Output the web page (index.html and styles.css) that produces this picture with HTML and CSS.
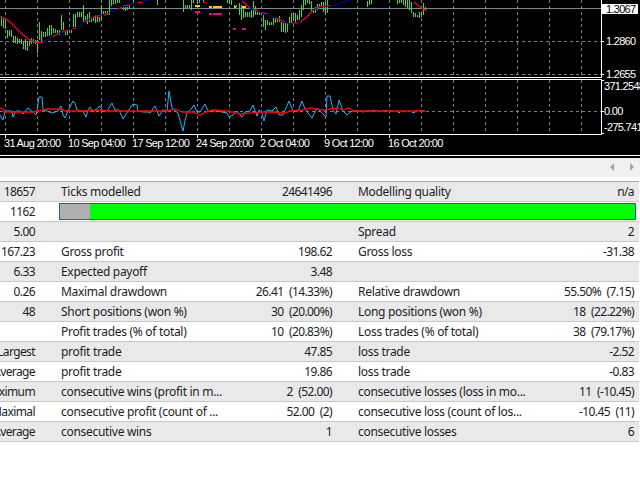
FILE: index.html
```html
<!DOCTYPE html>
<html lang="en">
    <head>
        <title>Strategy Tester Report</title>
        <meta charset="UTF-8">
        <link rel="stylesheet" href="styles.css">
    </head>
    <body>
        <svg class="chart" width="640" height="158" viewBox="0 0 640 158" xmlns="http://www.w3.org/2000/svg">
            <!-- grid -->
            <path class="grid-solid" d="M0 8.5H601"/>
            <path class="grid" d="M0 41.5H601M0 74.5H601M0 111.5H601"/>
            <path class="grid" d="M5.5 0V77M37.5 0V77M69.5 0V77M101.5 0V77M133.5 0V77M165.5 0V77M197.5 0V77M229.5 0V77M261.5 0V77M293.5 0V77M325.5 0V77M357.5 0V77M389.5 0V77M421.5 0V77M453.5 0V77M485.5 0V77M517.5 0V77M549.5 0V77M581.5 0V77"/>
            <path class="grid" d="M5.5 80V134M37.5 80V134M69.5 80V134M101.5 80V134M133.5 80V134M165.5 80V134M197.5 80V134M229.5 80V134M261.5 80V134M293.5 80V134M325.5 80V134M357.5 80V134M389.5 80V134M421.5 80V134M453.5 80V134M485.5 80V134M517.5 80V134M549.5 80V134M581.5 80V134"/>

            <!-- price bars -->
            <path class="bars" d="M1.5 16V26M3.5 17V28M5.5 20V29M7.5 30V38M9.5 30V36M11.5 30V37M13.5 36V43M15.5 36V43M17.5 38V44M19.5 39V43M21.5 39V44M23.5 41V49M25.5 39V50M27.5 41V51M29.5 39V46M31.5 38V44M33.5 39V43M35.5 40V44M37.5 40V53M39.5 22V40M41.5 31V42M43.5 32V37M45.5 32V37M47.5 28V36M49.5 25V36M51.5 25V35M53.5 28V33M55.5 29V33M57.5 30V35M59.5 30V35M61.5 15V30M63.5 22V30M65.5 30V35M67.5 30V35M69.5 29V32M71.5 30V33M73.5 14V27M75.5 14V27M77.5 12V17M79.5 12V17M81.5 12V17M83.5 5V22M85.5 16V20M87.5 14V24M89.5 12V22M91.5 17V22M93.5 16V21M95.5 15V23M97.5 16V22M99.5 17V22M101.5 5V20M103.5 11V15M105.5 11V15M107.5 11V15M109.5 0V15M111.5 0V6M113.5 0V4M115.5 0V4M117.5 0V3M119.5 0V3M123.5 7V10M125.5 7V11M127.5 7V10M129.5 5V9M133.5 0V4M157.5 0V5"/>
            <path class="bars" d="M183.5 0V12M185.5 5V8M187.5 5V8M189.5 5V8M191.5 0V10M193.5 0V3M197.5 0V4M199.5 0V3M203.5 0V3M227.5 0V3M229.5 0V4M231.5 0V5M234.5 5V8M236.5 5V7M239.5 3V15M241.5 5V20M243.5 7V18M245.5 12V17M247.5 12V17M249.5 12V17M251.5 10V18M253.5 1V17M255.5 6V15M257.5 12V15M259.5 12V15M261.5 12V15M263.5 15V27M265.5 20V30M267.5 20V25M269.5 22V25M271.5 22V25M273.5 18V25M275.5 18V23M277.5 18V22M279.5 16V22M281.5 22V32M283.5 23V32M285.5 23V33M287.5 23V32M289.5 17V25M291.5 13V23M293.5 13V20M295.5 13V22M297.5 15V20M299.5 10V20M301.5 5V17M303.5 0V10M305.5 0V5M307.5 0V3M309.5 0V4M311.5 1V12M313.5 10V13M315.5 7V13M317.5 4V10M319.5 4V8M321.5 2V7M323.5 2V12M325.5 2V15M327.5 0V13M367.5 1V7M369.5 0V5M371.5 0V4M397.5 0V4M399.5 0V3M401.5 0V3M403.5 0V5M405.5 0V7M407.5 0V8M409.5 0V10M411.5 2V13M413.5 12V17M415.5 13V17M417.5 15V17M419.5 12V18M421.5 12V17M423.5 3V15M425.5 7V10"/>

            <!-- moving average -->
            <polyline class="ma-blue" points="0,18 5,18 10,22 20,32 28,39 37,43 43,42 55,35 68,30 75,28 85,22 95,16 110,13 118,9 128,5 137,2 150,0"/>
            <polyline class="ma-red" points="0,18 5,18 10,22 20,32 28,39 37,43 43,42"/>
            <path class="ma-red" d="M52 37L58 34M62 32L68 30M73 29L76 28M85 22L88 20M93 17L100 15.500M104 15.500L110 13M118 9L122 7M123 6L130 5M138 2.500H142M203 2L207 2.500"/>
            <polyline class="ma-blue" points="242,1 250,8 260,12 277,18 290,24 300,22 307,17 313,10 320,7 335,5 340,3 350,0"/>
            <path class="ma-red" d="M242 1L250 8M253 9L258 11M262 12.500L267 14M275 18L285 22M292 23H298M300 22L307 17L313 10M316 8L320 6.500L330 5.500"/>
            <polyline class="ma-red" points="414,2 420,7 427,11"/>

            <!-- order marks -->
            <path class="mark-yellow" d="M195 5h5v2h-5zM209 6h3v2h-3zM213 6h9v2h-9zM234 6h2v2h-2zM242 6h4v2h-4z"/>
            <path class="mark-pink" d="M195 11h5v2h-5zM209 13h3v2h-3zM213 13h9v2h-9zM233 28h3v2h-3zM242 28h4v2h-4z"/>

            <!-- indicator window -->
            <polyline class="osc" points="0,115 3,120 5,111 12,111 13,117 16,111 20,111 23,114 28,108 33,112 36,115 37,111 39,97 42,97 43,110 47,111 52,113 58,111 61,106 63,115 65,118 68,111 73,101 75,103 77,110 83,111 86,117 88,110 90,107 93,112 100,106 103,111 107,111 112,103 115,110 119,110 123,119 128,111 133,104 137,105 138,111 143,112 148,112 150,113 155,106 159,116 163,110 167,111 169,91 172,108 175,111 178,113 183,131 185,121 187,113 192,108 194,105 197,112 200,112 205,104 208,111 217,111 227,113 229,117 233,115 237,111 240,115 242,117 245,112 250,111 253,105 257,116 259,110 262,113 264,121 267,110 272,111 276,107 279,115 283,115 289,101 293,111 298,111 302,101 305,109 312,118 317,108 322,113 326,117 327,96 330,96 333,110 336,114 339,100 343,111 347,115 352,111 360,111 363,112 367,111 375,111"/>
            <path class="osc" d="M372 110.500H377M382 110.500H387M398 112.500H400M412 112.500H415M422 110.500H425"/>
            <polyline class="signal" points="0,108 3,109 6,112 20,112 33,112 38,111 48,109 62,109 65,111 83,111 100,110 110,111 127,111 137,111 147,111 167,111 175,109 182,112 193,112 200,115 208,111 213,110 227,111 233,112 240,114 260,112 273,112 285,113 290,111 302,110 310,108 323,110 338,108 343,110 348,108 355,111 363,111 367,111 425,111"/>

            <!-- frame and ticks -->
            <path class="frame" d="M0 77.500H601.500V0M0 79.500H601.500V134.500H0"/>
            <path class="frame" d="M5.500 134V138M69.500 134V138M133.500 134V138M197.500 134V138M261.500 134V138M325.500 134V138M389.500 134V138"/>
            <path class="frame" d="M601 41.500H604M601 74.500H604M601 80.500H604M601 111.500H604M601 133.500H604"/>
            <path class="frame" d="M0 155.500H640"/>

            <!-- axis labels -->
            <rect class="price-box" x="602" y="4" width="36" height="10"/>
            <text class="axis-now" x="606" y="12.500">1.3067</text>
            <text class="axis" x="606" y="45">1.2860</text>
            <text class="axis" x="606" y="78">1.2655</text>
            <text class="axis" x="604" y="90">371.2548</text>
            <text class="axis" x="604" y="115">0.00</text>
            <text class="axis" x="604" y="131">-275.741</text>
            <text class="axis" x="4" y="147">31 Aug 20:00</text>
            <text class="axis" x="68" y="147">10 Sep 04:00</text>
            <text class="axis" x="132" y="147">17 Sep 12:00</text>
            <text class="axis" x="196" y="147">24 Sep 20:00</text>
            <text class="axis" x="260" y="147">2 Oct 04:00</text>
            <text class="axis" x="324" y="147">9 Oct 12:00</text>
            <text class="axis" x="388" y="147">16 Oct 20:00</text>
        </svg>

        <div class="tabs-bar">
            <svg width="5" height="9" viewBox="0 0 5 9" xmlns="http://www.w3.org/2000/svg"><path d="M4 0V8L0 4z"/></svg>
            <svg width="5" height="9" viewBox="0 0 5 9" xmlns="http://www.w3.org/2000/svg"><path d="M1 0V8L5 4z"/></svg>
        </div>

        <div class="report">
            <div class="row">
                <span class="val">18657</span><span class="lbl">Ticks modelled</span><span class="val">24641496</span><span class="lbl">Modelling quality</span><span class="val">n/a</span>
            </div>
            <div class="row">
                <span class="val">1162</span>
                <div class="quality"><div class="quality-gray"></div></div>
            </div>
            <div class="row">
                <span class="val">5.00</span><span class="lbl"></span><span class="val"></span><span class="lbl">Spread</span><span class="val">2</span>
            </div>
            <div class="row">
                <span class="val">167.23</span><span class="lbl">Gross profit</span><span class="val">198.62</span><span class="lbl">Gross loss</span><span class="val">-31.38</span>
            </div>
            <div class="row">
                <span class="val">6.33</span><span class="lbl">Expected payoff</span><span class="val">3.48</span><span class="lbl"></span><span class="val"></span>
            </div>
            <div class="row">
                <span class="val">0.26</span><span class="lbl">Maximal drawdown</span><span class="val">26.41 (14.33%)</span><span class="lbl">Relative drawdown</span><span class="val">55.50% (7.15)</span>
            </div>
            <div class="row">
                <span class="val">48</span><span class="lbl">Short positions (won %)</span><span class="val">30 (20.00%)</span><span class="lbl">Long positions (won %)</span><span class="val">18 (22.22%)</span>
            </div>
            <div class="row">
                <span class="val"></span><span class="lbl">Profit trades (% of total)</span><span class="val">10 (20.83%)</span><span class="lbl">Loss trades (% of total)</span><span class="val">38 (79.17%)</span>
            </div>
            <div class="row">
                <span class="val">Largest</span><span class="lbl">profit trade</span><span class="val">47.85</span><span class="lbl">loss trade</span><span class="val">-2.52</span>
            </div>
            <div class="row">
                <span class="val">Average</span><span class="lbl">profit trade</span><span class="val">19.86</span><span class="lbl">loss trade</span><span class="val">-0.83</span>
            </div>
            <div class="row">
                <span class="val">Maximum</span><span class="lbl">consecutive wins (profit in m...</span><span class="val">2 (52.00)</span><span class="lbl">consecutive losses (loss in mo...</span><span class="val">11 (-10.45)</span>
            </div>
            <div class="row">
                <span class="val">Maximal</span><span class="lbl">consecutive profit (count of ...</span><span class="val">52.00 (2)</span><span class="lbl">consecutive loss (count of los...</span><span class="val">-10.45 (11)</span>
            </div>
            <div class="row">
                <span class="val">Average</span><span class="lbl">consecutive wins</span><span class="val">1</span><span class="lbl">consecutive losses</span><span class="val">6</span>
            </div>
        </div>
    </body>
</html>
```

FILE: styles.css
```css
body {
    margin: 0;
    overflow: hidden;
    background-color: #fff;
    color: #1c1c28;
    font-family: "Noto Sans", sans-serif;
    font-size: 12px;
}

.chart {
    display: block;
    background-color: black;
}

.chart polyline, .chart path {
    fill: none;
}

.grid {
    stroke: #74808c;
    stroke-width: 1;
    stroke-dasharray: 3 3;
}

.grid-solid {
    stroke: #7c8a98;
    stroke-width: 1;
}

.bars {
    stroke: #34e02c;
    stroke-width: 1;
}

.ma-blue {
    stroke: #000a90;
    stroke-width: 1.2;
}

.ma-red {
    stroke: #f00;
    stroke-width: 1.2;
}

.chart .mark-yellow {
    fill: #ffcc00;
}

.chart .mark-pink {
    fill: #f0047f;
}

.osc {
    stroke: #1eb4ff;
    stroke-width: 1;
}

.signal {
    stroke: #f00;
    stroke-width: 1.3;
}

.frame {
    stroke: #fff;
    stroke-width: 1;
}

.price-box {
    fill: #fff;
}

.axis, .axis-now {
    font-family: "Liberation Sans", sans-serif;
    font-size: 11px;
    letter-spacing: -0.7px;
}

.axis {
    fill: #fff;
}

.axis-now {
    fill: #000;
}

.tabs-bar {
    height: 19px;
    margin-bottom: 4px;
    padding-right: 6px;
    background-color: #f0f0f0;
    display: flex;
    justify-content: flex-end;
    align-items: center;
    gap: 14px;
}

.tabs-bar path {
    fill: #a4a4a4;
}

.report {
    border-top: 1px solid #a8a8a8;
    margin-right: 1px;
}

.row {
    height: 20px;
    box-sizing: border-box;
    border-bottom: 1px solid #c8c8c8;
    display: grid;
    grid-template-columns: 40px 189px 108px 189px 113px;
    align-items: center;
    line-height: 19px;
}

.row:nth-child(odd) {
    background-color: #e9e9e9;
}

.val {
    padding-right: 5px;
    display: flex;
    justify-content: flex-end;
    white-space: nowrap;
    letter-spacing: -0.6px;
    word-spacing: 3px;
}

.lbl {
    padding-left: 21px;
    white-space: nowrap;
    overflow: hidden;
    letter-spacing: -0.3px;
}

.quality {
    grid-column: 2 / -1;
    height: 17px;
    box-sizing: border-box;
    margin: 0 3px 0 19px;
    border: 1px solid #1a5fa8;
    background-color: #0f0;
}

.quality-gray {
    width: 30px;
    height: 100%;
    background-color: #b0b0b0;
}
```
